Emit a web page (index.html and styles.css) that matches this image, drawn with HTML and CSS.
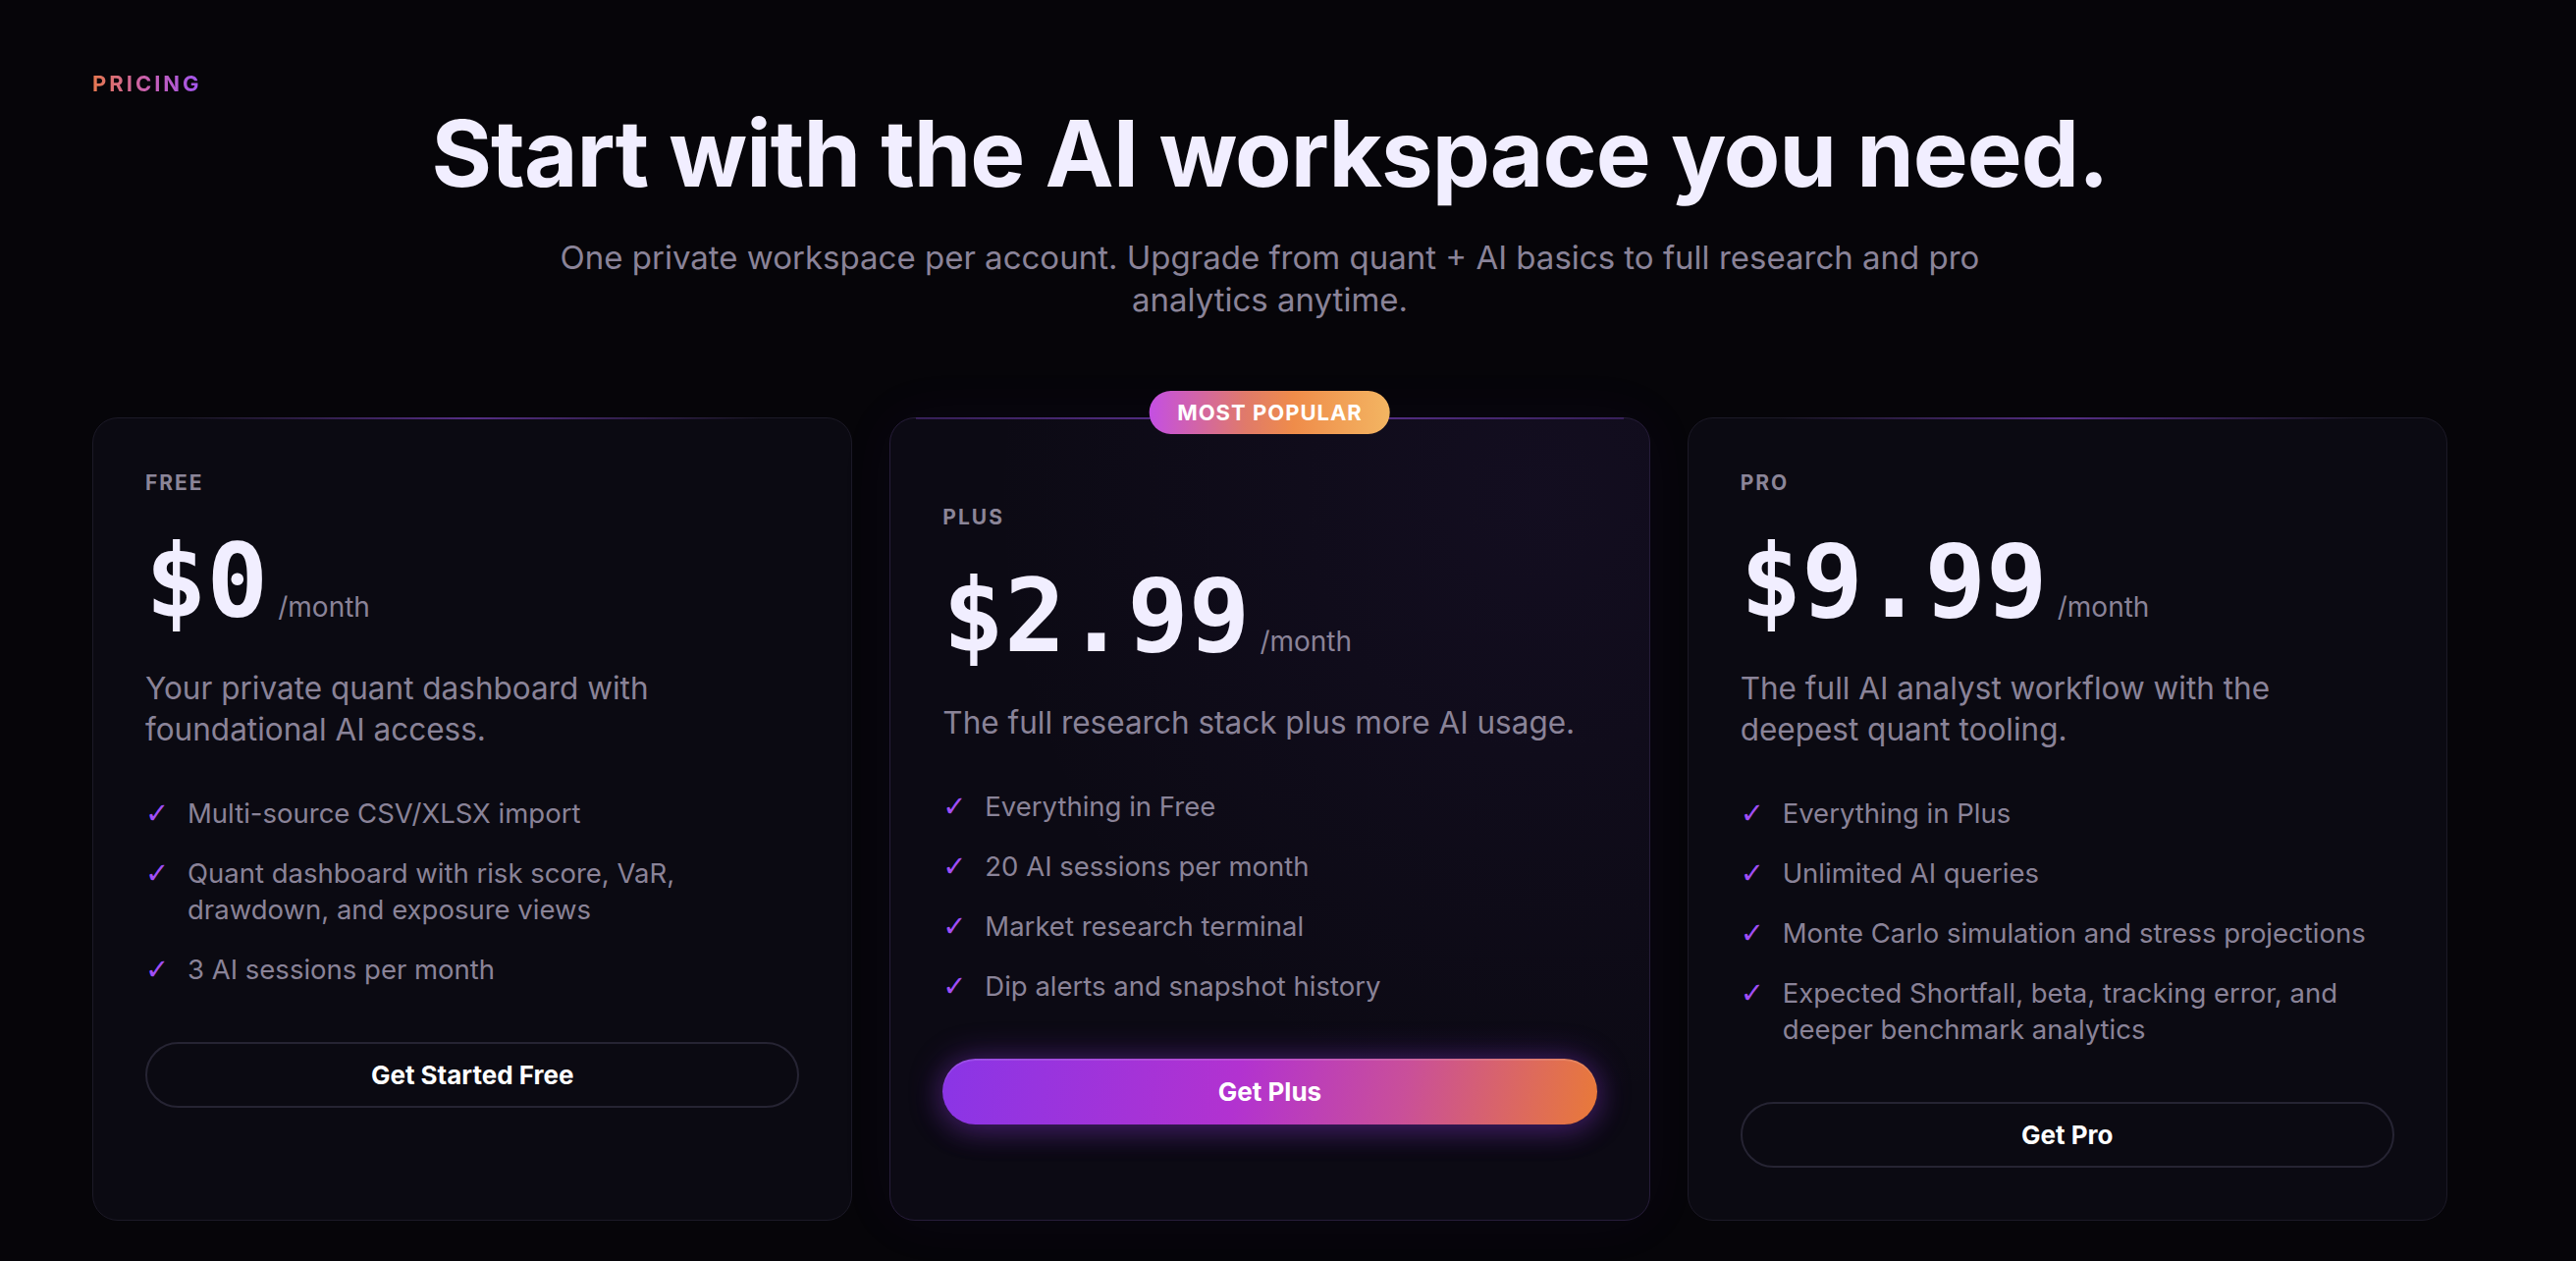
FILE: index.html
```html
<!DOCTYPE html>
<html lang="en">
<head>
<meta charset="utf-8">
<title>Pricing</title>
<link rel="stylesheet" href="styles.css">
</head>
<body>
<main class="pricing">
  <div class="eyebrow">PRICING</div>
  <h1 class="title">Start with the AI workspace you need.</h1>
  <p class="subtitle">One private workspace per account. Upgrade from quant + AI basics to full research and pro analytics anytime.</p>

  <div class="plans">
    <section class="plan">
      <div class="plan-name">FREE</div>
      <div class="price-row"><span class="price">$0</span><span class="per">/month</span></div>
      <p class="plan-desc">Your private quant dashboard with foundational AI access.</p>
      <ul class="features">
        <li><span class="check">✓</span><span>Multi-source CSV/XLSX import</span></li>
        <li><span class="check">✓</span><span>Quant dashboard with risk score, VaR, drawdown, and exposure views</span></li>
        <li><span class="check">✓</span><span>3 AI sessions per month</span></li>
      </ul>
      <a class="btn btn-outline">Get Started Free</a>
    </section>

    <section class="plan plan-featured">
      <div class="badge">MOST POPULAR</div>
      <div class="plan-name">PLUS</div>
      <div class="price-row"><span class="price">$2.99</span><span class="per">/month</span></div>
      <p class="plan-desc">The full research stack plus more AI usage.</p>
      <ul class="features">
        <li><span class="check">✓</span><span>Everything in Free</span></li>
        <li><span class="check">✓</span><span>20 AI sessions per month</span></li>
        <li><span class="check">✓</span><span>Market research terminal</span></li>
        <li><span class="check">✓</span><span>Dip alerts and snapshot history</span></li>
      </ul>
      <a class="btn btn-gradient">Get Plus</a>
    </section>

    <section class="plan">
      <div class="plan-name">PRO</div>
      <div class="price-row"><span class="price">$9.99</span><span class="per">/month</span></div>
      <p class="plan-desc">The full AI analyst workflow with the deepest quant tooling.</p>
      <ul class="features">
        <li><span class="check">✓</span><span>Everything in Plus</span></li>
        <li><span class="check">✓</span><span>Unlimited AI queries</span></li>
        <li><span class="check">✓</span><span>Monte Carlo simulation and stress projections</span></li>
        <li><span class="check">✓</span><span>Expected Shortfall, beta, tracking error, and deeper benchmark analytics</span></li>
      </ul>
      <a class="btn btn-outline">Get Pro</a>
    </section>
  </div>
</main>
</body>
</html>
```

FILE: styles.css
```css
* { box-sizing: border-box; }

html, body {
  margin: 0;
  padding: 0;
  background: #060509;
  height: 100%;
}

body {
  font-family: "Inter", "Noto Sans", sans-serif;
  color: #f0edff;
}

.pricing {
  width: 2399px;
  margin-left: 94px;
  padding-top: 72px;
}

.eyebrow {
  font-size: 22px;
  line-height: 26px;
  font-weight: 700;
  letter-spacing: 3px;
  background: linear-gradient(90deg, #e5774f 0%, #c860b0 50%, #a055f0 100%);
  -webkit-background-clip: text;
  background-clip: text;
  color: transparent;
  width: max-content;
}

.title {
  margin: 7px 0 0;
  text-align: center;
  font-size: 94px;
  line-height: 1.1;
  font-weight: 700;
  letter-spacing: -1px;
  color: #f1eeff;
}

.subtitle {
  margin: 33px auto 0;
  max-width: 1520px;
  text-align: center;
  font-size: 33px;
  line-height: 43px;
  color: #8a8398;
}

.plans {
  margin-top: 98px;
  display: grid;
  grid-template-columns: repeat(3, 1fr);
  gap: 38px;
}

.plan {
  position: relative;
  display: flex;
  flex-direction: column;
  align-items: stretch;
  padding: 53px 53px 53px;
  border: 1px solid #1c1a27;
  border-radius: 26px;
  background: #0b0a12;
}

.plan::before {
  content: "";
  position: absolute;
  top: -1px;
  left: 12%;
  right: 12%;
  height: 2px;
  background: linear-gradient(90deg, rgba(140,70,220,0) 0%, rgba(140,70,220,0.55) 50%, rgba(140,70,220,0) 100%);
}

.plan-featured {
  padding-top: 88px;
  border-color: #271d3a;
  background:
    radial-gradient(ellipse at 85% 10%, rgba(110,60,190,0.07), rgba(110,60,190,0) 60%),
    #0c0a14;
  box-shadow: 0 0 60px rgba(110, 50, 200, 0.06);
}

.plan-featured::before {
  left: 26px;
  right: 26px;
  background: linear-gradient(90deg, rgba(120,60,200,0.3) 0%, rgba(140,70,220,0.6) 50%, rgba(120,60,200,0.3) 100%);
}

.badge {
  position: absolute;
  top: -28px;
  left: 50%;
  transform: translateX(-50%);
  height: 44px;
  padding: 0 28px;
  border-radius: 22px;
  display: flex;
  align-items: center;
  font-size: 22px;
  font-weight: 700;
  letter-spacing: 1px;
  color: #ffffff;
  white-space: nowrap;
  background: linear-gradient(90deg, #c44fe3 0%, #e07a6a 40%, #ef8c4a 60%, #f3b562 100%);
  z-index: 2;
}

.plan-name {
  font-size: 21px;
  line-height: 26px;
  font-weight: 700;
  letter-spacing: 2px;
  color: #8b8598;
}

.price-row {
  margin-top: 35px;
  display: flex;
  align-items: baseline;
}

.price {
  font-family: "DejaVu Sans Mono", "Liberation Mono", monospace;
  font-size: 104px;
  line-height: 104px;
  font-weight: 700;
  color: #f1eeff;
}

.per {
  margin-left: 10px;
  font-size: 28px;
  color: #8a8398;
}

.plan-desc {
  margin: 36px 0 0;
  max-width: 650px;
  font-size: 31.5px;
  line-height: 42px;
  color: #8a8398;
}

.features {
  list-style: none;
  margin: 46px 0 0;
  padding: 0;
  display: flex;
  flex-direction: column;
  gap: 24px;
}

.features li {
  display: flex;
  align-items: flex-start;
  font-size: 27.5px;
  line-height: 37px;
  color: #8a8398;
}

.check {
  flex: 0 0 43px;
  color: #a04ef5;
  font-family: "DejaVu Sans", sans-serif;
  font-size: 29px;
  font-weight: 700;
}

.btn {
  margin-top: 55px;
  height: 67px;
  border-radius: 34px;
  display: flex;
  align-items: center;
  justify-content: center;
  font-size: 26px;
  font-weight: 700;
  color: #ffffff;
  text-decoration: none;
}

.btn-outline {
  border: 2px solid #262433;
  background: transparent;
}

.btn-gradient {
  background: linear-gradient(100deg, #8a35e6 0%, #b232d0 45%, #c94f9a 70%, #e97a38 100%);
  box-shadow: 0 0 34px rgba(150, 60, 230, 0.35), 0 8px 30px rgba(150, 60, 230, 0.2), inset 0 2px 0 rgba(255,255,255,0.12);
}
```
